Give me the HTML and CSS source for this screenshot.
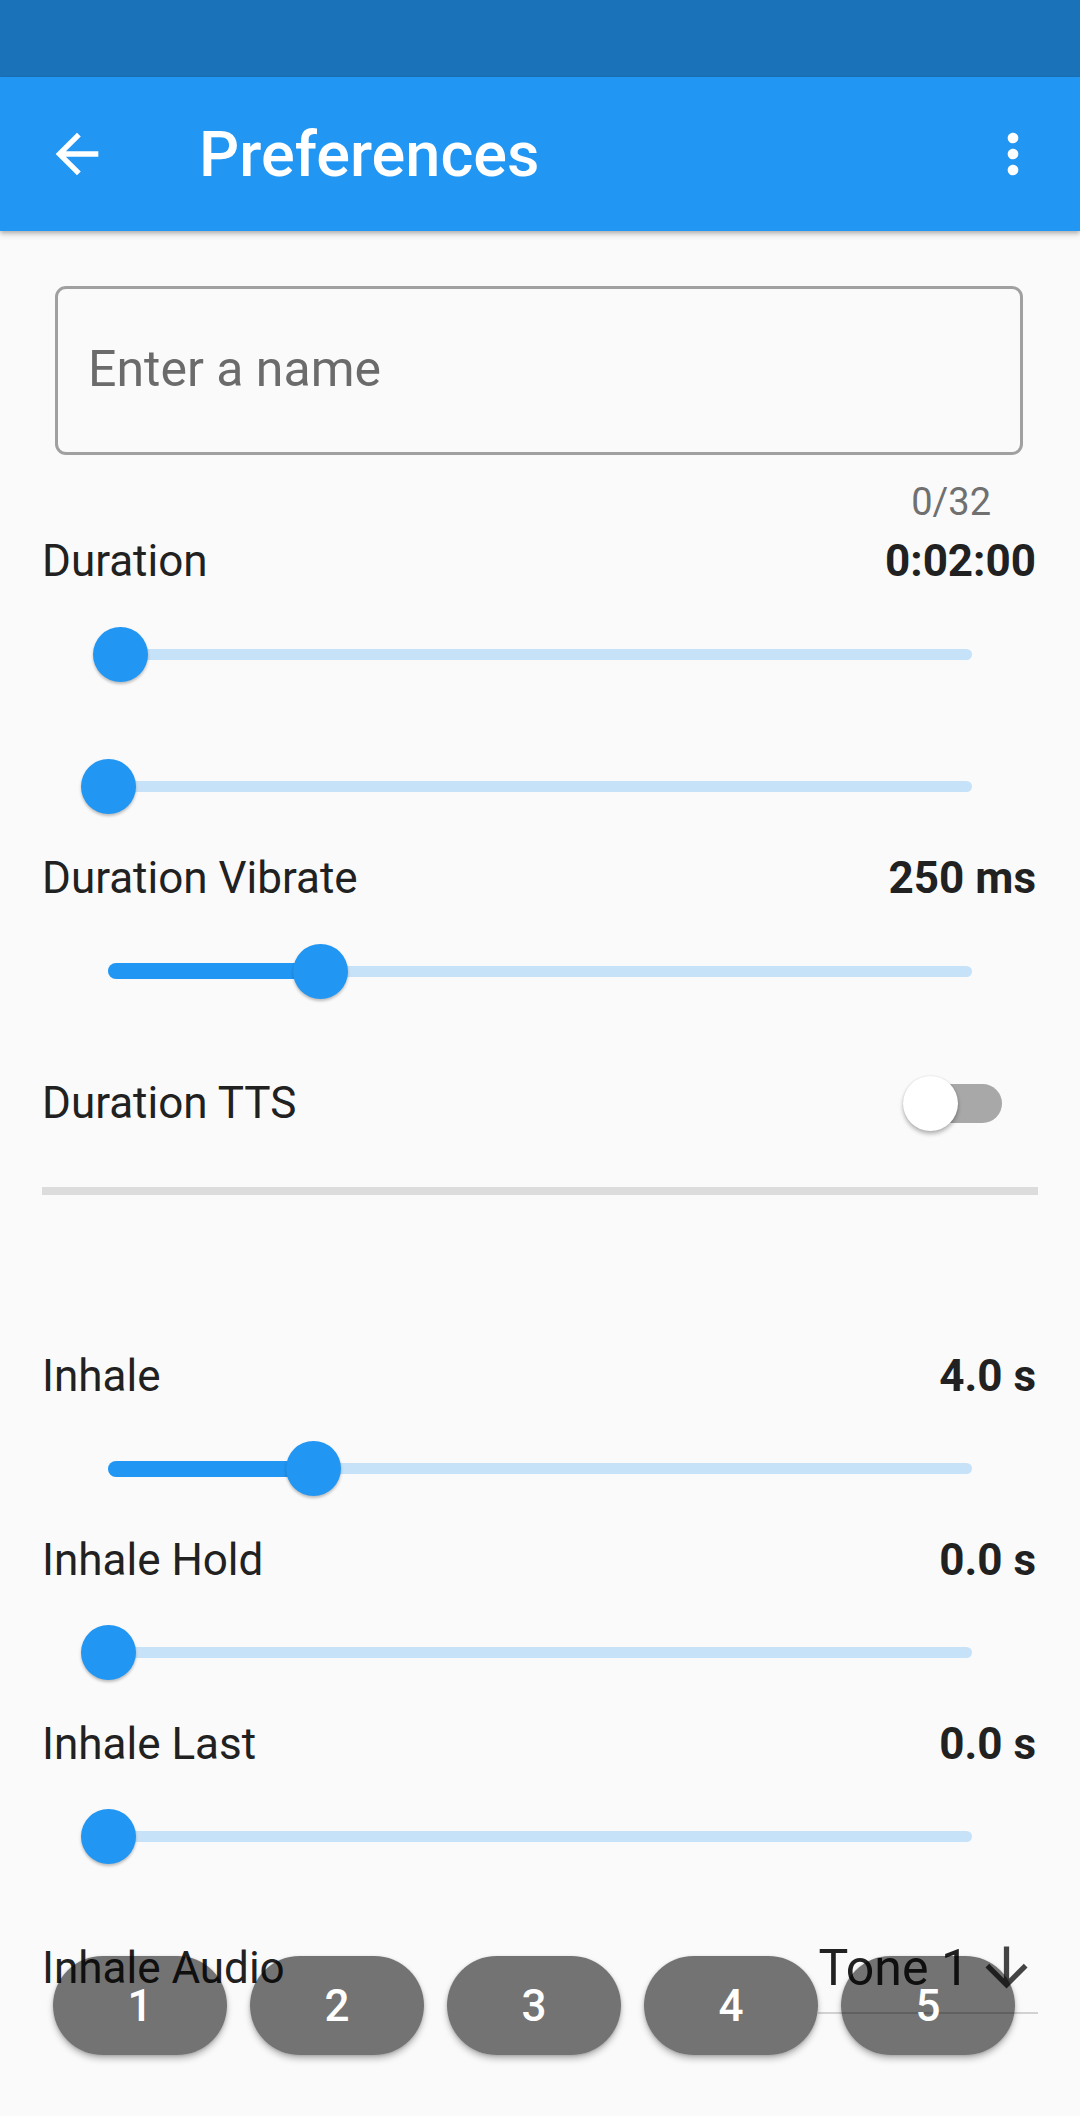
FILE: index.html
```html
<!DOCTYPE html>
<html lang="en">
<head>
<meta charset="utf-8">
<title>Preferences</title>
<link rel="stylesheet" href="styles.css">
</head>
<body>
<div class="status-bar"></div>
<header class="appbar">
  <svg class="appbar-icon" viewBox="0 0 24 24"><path d="M20 11H7.83l5.59-5.59L12 4l-8 8 8 8 1.41-1.41L7.83 13H20v-2z"/></svg>
  <h1 class="appbar-title">Preferences</h1>
  <svg class="appbar-icon" viewBox="0 0 24 24"><path d="M12 8c1.1 0 2-.9 2-2s-.9-2-2-2-2 .9-2 2 .9 2 2 2zm0 2c-1.1 0-2 .9-2 2s.9 2 2 2 2-.9 2-2-.9-2-2-2zm0 6c-1.1 0-2 .9-2 2s.9 2 2 2 2-.9 2-2-.9-2-2-2z"/></svg>
</header>

<main class="content">
  <div class="field"><input class="field-input" type="text" placeholder="Enter a name"></div>
  <div class="counter">0/32</div>

  <div class="label-row"><span class="label">Duration</span><span class="value">0:02:00</span></div>
  <div class="slider"><div class="track"><div class="active" style="width:1.5%"></div><div class="thumb" style="left:1.5%"></div></div></div>
  <div class="slider"><div class="track"><div class="thumb" style="left:0%"></div></div></div>

  <div class="label-row"><span class="label">Duration Vibrate</span><span class="value">250 ms</span></div>
  <div class="slider"><div class="track"><div class="active" style="width:24.65%"></div><div class="thumb" style="left:24.65%"></div></div></div>

  <div class="switch-row">
    <span class="label">Duration TTS</span>
    <div class="switch"><div class="switch-track"></div><div class="switch-thumb"></div></div>
  </div>

  <div class="divider"></div>

  <div class="label-row section-start"><span class="label">Inhale</span><span class="value">4.0 s</span></div>
  <div class="slider slider-sm"><div class="track"><div class="active" style="width:23.84%"></div><div class="thumb" style="left:23.84%"></div></div></div>

  <div class="label-row"><span class="label">Inhale Hold</span><span class="value">0.0 s</span></div>
  <div class="slider slider-sm"><div class="track"><div class="thumb" style="left:0%"></div></div></div>

  <div class="label-row"><span class="label">Inhale Last</span><span class="value">0.0 s</span></div>
  <div class="slider slider-sm"><div class="track"><div class="thumb" style="left:0%"></div></div></div>

  <div class="audio-row">
    <span class="label">Inhale Audio</span>
    <div class="dropdown">
      <span class="dropdown-text">Tone 1</span>
      <svg class="dropdown-icon" viewBox="0 0 24 24"><path d="M20 12l-1.41-1.41L13 16.17V4h-2v12.17l-5.58-5.59L4 12l8 8 8-8z"/></svg>
    </div>
  </div>
</main>

<nav class="presets">
  <button class="preset">1</button>
  <button class="preset">2</button>
  <button class="preset">3</button>
  <button class="preset">4</button>
  <button class="preset">5</button>
</nav>
</body>
</html>
```

FILE: styles.css
```css
* { box-sizing: border-box; }

html, body {
  margin: 0;
  padding: 0;
}

body {
  width: 1080px;
  height: 2116px;
  overflow: hidden;
  background: #fafafa;
  font-family: Roboto, "Noto Sans", sans-serif;
  color: #212121;
  position: relative;
}

.status-bar {
  height: 77px;
  background: #1a72b9;
}

.appbar {
  position: relative;
  z-index: 2;
  height: 154px;
  background: #2196f3;
  display: flex;
  align-items: center;
  padding: 0 35px 0 45px;
  box-shadow: 0 2px 4px rgba(0,0,0,0.2), 0 4px 6px rgba(0,0,0,0.12);
}

.appbar-icon {
  width: 64px;
  height: 64px;
  fill: #ffffff;
  flex: none;
}

.appbar-title {
  flex: 1;
  margin: 0 0 0 90px;
  font-size: 63px;
  line-height: 1;
  font-weight: 500;
  color: #ffffff;
}

.content {
  padding: 0 44px 0 42px;
}

.field {
  margin: 55px 13px 0 13px;
  height: 169px;
  border: 3px solid #a0a0a0;
  border-radius: 11px;
  display: flex;
  align-items: center;
  padding: 0 0 0 30px;
}

.field-input {
  width: 100%;
  border: none;
  outline: none;
  background: transparent;
  font-family: Roboto, sans-serif;
  font-size: 50px;
  color: #212121;
  padding: 0;
  margin-top: -3px;
}

.field-input::placeholder {
  color: #6b6b6b;
}

.counter {
  margin-top: 25px;
  height: 44px;
  line-height: 44px;
  font-size: 38px;
  color: #707070;
  text-align: right;
  padding-right: 45px;
}

.label-row {
  height: 53px;
  display: flex;
  justify-content: space-between;
  align-items: center;
  line-height: 53px;
  font-size: 44px;
}

.counter + .label-row {
  margin-top: 11px;
}

.label {
  font-size: 44px;
  line-height: 53px;
  color: #212121;
}

.value {
  font-weight: 700;
  color: #212121;
}

.slider {
  height: 132px;
  display: flex;
  align-items: center;
  padding: 0 64px 0 66px;
}

.slider-sm {
  height: 131px;
}

.track {
  position: relative;
  width: 100%;
  height: 11px;
  border-radius: 6px;
  background: #c6e2f8;
}

.active {
  position: absolute;
  left: 0;
  top: -2.5px;
  height: 16px;
  border-radius: 8px 0 0 8px;
  background: #2196f3;
}

.thumb {
  position: absolute;
  top: 50%;
  width: 55px;
  height: 55px;
  margin: -27.5px 0 0 -27.5px;
  border-radius: 50%;
  background: #2196f3;
  box-shadow: 0 2px 3px rgba(0,0,0,0.25);
}

.switch-row {
  height: 132px;
  display: flex;
  align-items: center;
  justify-content: space-between;
}

.switch {
  position: relative;
  width: 99px;
  height: 55px;
  margin-right: 34px;
}

.switch-track {
  position: absolute;
  left: 8px;
  right: 0;
  top: 8px;
  height: 39px;
  border-radius: 20px;
  background: #a8a8a8;
}

.switch-thumb {
  position: absolute;
  left: 0;
  top: 0;
  width: 55px;
  height: 55px;
  border-radius: 50%;
  background: #ffffff;
  box-shadow: 0 3px 4px rgba(0,0,0,0.28), 0 0 2px rgba(0,0,0,0.12);
}

.divider {
  margin-top: 18px;
  height: 8px;
  background: #dcdcdc;
  margin-right: -2px;
}

.section-start {
  margin-top: 155px;
}

.audio-row {
  margin-top: 40px;
  display: flex;
  justify-content: space-between;
  align-items: flex-start;
}

.dropdown {
  display: flex;
  align-items: flex-start;
  height: 72px;
  border-bottom: 2px solid #d2d2d2;
  margin-right: -2px;
  padding-left: 0;
}

.dropdown-text {
  font-size: 50px;
  line-height: 53px;
  color: #212121;
}

.dropdown-icon {
  width: 63px;
  height: 63px;
  margin: -6px 0 0 6px;
  fill: #444444;
}

.presets {
  position: absolute;
  left: 53px;
  top: 1956px;
  display: flex;
  gap: 23px;
}

.preset {
  width: 174px;
  height: 99px;
  border: none;
  border-radius: 50px;
  background: rgba(0,0,0,0.54);
  color: #ffffff;
  font-family: Roboto, sans-serif;
  font-size: 44px;
  font-weight: 500;
  padding: 0;
  box-shadow: 0 4px 6px rgba(0,0,0,0.25), 0 1px 3px rgba(0,0,0,0.15);
}
```
